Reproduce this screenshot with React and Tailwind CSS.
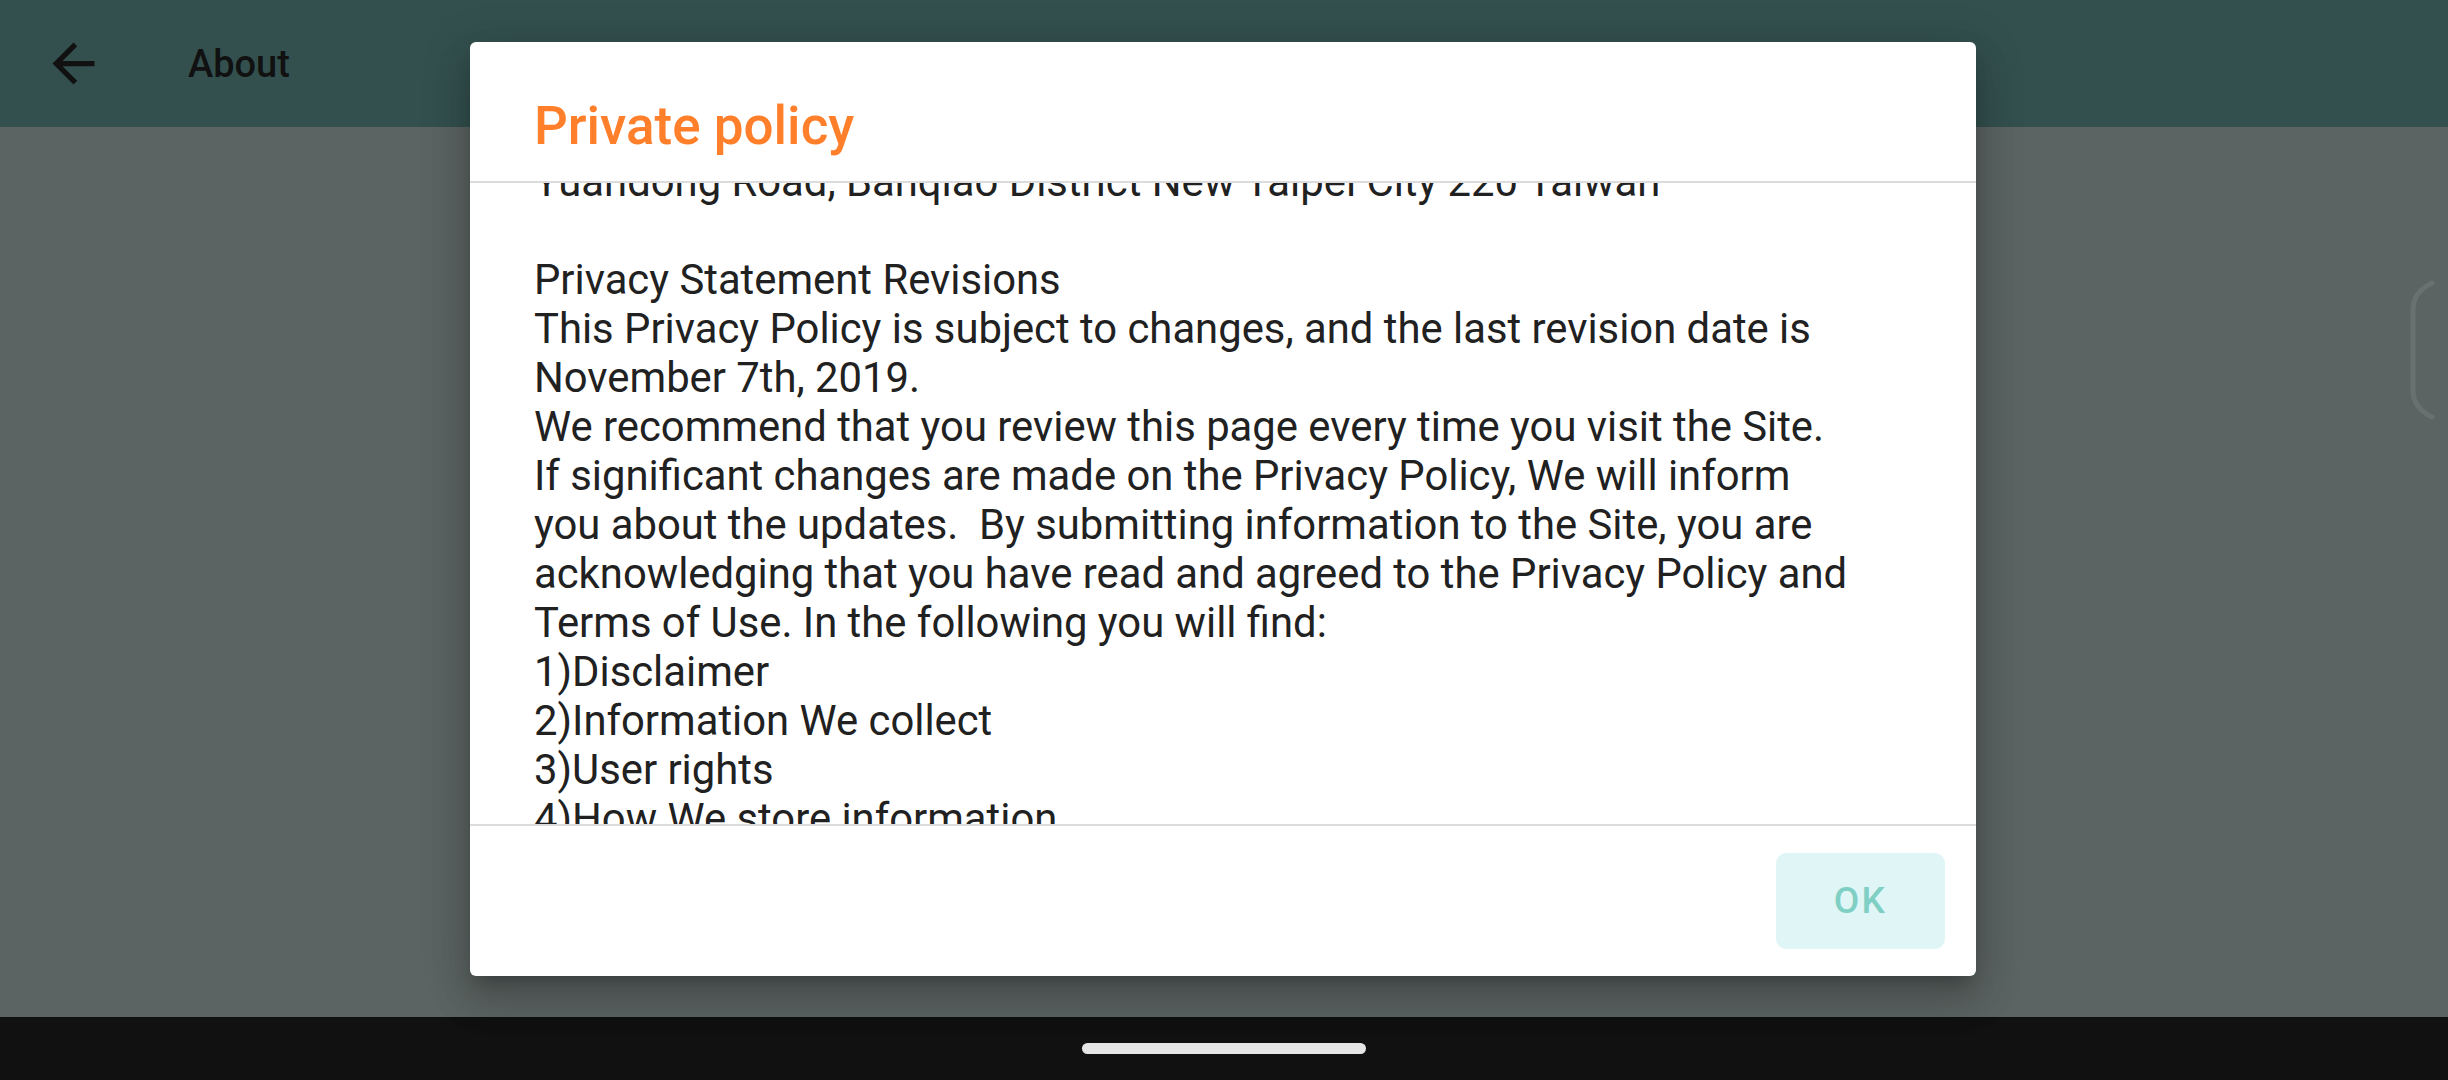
import React from "react";

const lines = [
  "Yuandong Road, Banqiao District New Taipei City 220 Taiwan",
  "",
  "Privacy Statement Revisions",
  "This Privacy Policy is subject to changes, and the last revision date is",
  "November 7th, 2019.",
  "We recommend that you review this page every time you visit the Site.",
  "If significant changes are made on the Privacy Policy, We will inform",
  "you about the updates.  By submitting information to the Site, you are",
  "acknowledging that you have read and agreed to the Privacy Policy and",
  "Terms of Use. In the following you will find:",
  "1)Disclaimer",
  "2)Information We collect",
  "3)User rights",
  "4)How We store information",
  "5)How We use information",
];

export default function App() {
  return (
    <div
      className="relative w-[2448px] h-[1080px] flex flex-col overflow-hidden bg-[#5b6462]"
      style={{ fontFamily: "Roboto, 'Noto Sans', 'Liberation Sans', sans-serif" }}
    >
      <header className="h-[127px] shrink-0 flex items-center bg-[#33504e]">
        <svg viewBox="0 0 24 24" className="ml-[42px] w-[63px] h-[63px] fill-[#111111]">
          <path d="M20 11H7.83l5.59-5.59L12 4l-8 8 8 8 1.41-1.41L7.83 13H20v-2z" />
        </svg>
        <span className="ml-[83px] text-[38px] font-medium text-[#111111] leading-none">About</span>
      </header>
      <main className="flex-1 bg-[#5b6462]" />
      <nav className="h-[63px] shrink-0 bg-[#111111] flex items-center justify-center">
        <div className="w-[284px] h-[11px] rounded-full bg-[#e6e6e6]" />
      </nav>

      <svg className="absolute left-[2400px] top-[276px] w-[48px] h-[148px]" viewBox="0 0 48 148" fill="none">
        <path d="M32 7 Q13 16 13 34 L13 114 Q13 132 32 141" stroke="#67716f" strokeWidth="5" strokeLinecap="round" />
      </svg>

      <div className="absolute left-[470px] top-[42px] w-[1506px] h-[934px] bg-white rounded-[6px] flex flex-col overflow-hidden shadow-[0_24px_38px_3px_rgba(0,0,0,0.14),0_9px_46px_8px_rgba(0,0,0,0.12),0_11px_15px_-7px_rgba(0,0,0,0.2)]">
        <div className="h-[139px] shrink-0 pl-[64px] pt-[58px]">
          <h1 className="text-[53px] leading-[53px] font-medium text-[#ff7f2a]">Private policy</h1>
        </div>
        <div className="h-[2px] shrink-0 bg-[#dcdcdc]" />
        <div className="h-[641px] shrink-0 overflow-hidden pl-[64px]">
          <div className="mt-[-26px] text-[41.8px] leading-[49px] text-[#212121]">
            {lines.map((l, i) => (
              <div key={i} className="whitespace-pre h-[49px]">{l}</div>
            ))}
          </div>
        </div>
        <div className="h-[2px] shrink-0 bg-[#dcdcdc]" />
        <div className="flex-1 flex items-start justify-end pt-[27px] pr-[31px]">
          <button className="w-[169px] h-[96px] rounded-[10px] bg-[#e0f6f6] text-[#80cfc4] text-[37px] font-medium tracking-[0.06em] flex items-center justify-center">
            OK
          </button>
        </div>
      </div>
    </div>
  );
}
